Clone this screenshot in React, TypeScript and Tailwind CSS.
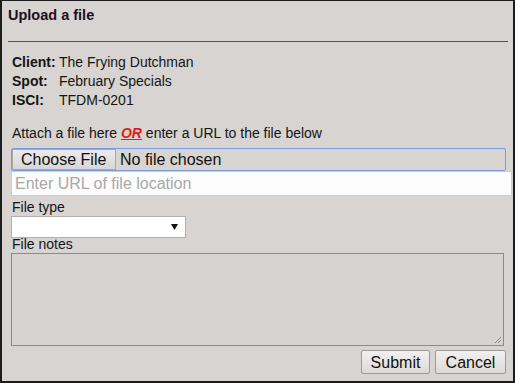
export default function App() {
  const info = [
    ["Client:", "The Frying Dutchman"],
    ["Spot:", "February Specials"],
    ["ISCI:", "TFDM-0201"],
  ]

  return (
    <div className="w-[515px] h-[383px] overflow-hidden bg-[#d7d4d1] border-x-2 border-t border-b-2 border-[#1c1c1c] font-['Liberation_Sans',Arial,sans-serif] text-[#151515]">
      {/* Header */}
      <div className="pl-[6px] pt-[6px]">
        <h2 className="text-[14.5px] leading-[17px] font-bold text-[#1d0f1d]">Upload a file</h2>
        <div className="mt-[17px] h-px w-[500px] bg-[#555]" />
      </div>

      <div className="pl-[9px] pr-[7px]">
        {/* Details */}
        <div className="mt-[11px] pl-px text-[14px] leading-[19px]">
          {info.map(([label, value]) => (
            <div key={label} className="flex">
              <span className="w-[47px] font-bold">{label}</span>
              <span>{value}</span>
            </div>
          ))}
        </div>

        <p className="mt-[16px] pl-px text-[14px] leading-[15px]">
          Attach a file here{" "}
          <span className="font-bold italic underline text-[#e01b1b]">OR</span> enter a URL to the file below
        </p>

        {/* File picker */}
        <div className="mt-[7px] flex items-center w-[495px] h-[23px] border border-[#7b9be3] rounded-[2px] text-[16px] leading-[19px]">
          <span className="flex items-center h-[21px] w-[104px] pl-[8px] border border-[#a9a7a5] bg-gradient-to-b from-[#ecebea] to-[#d9d7d5] text-[#111]">
            Choose File
          </span>
          <span className="pl-[4px] text-[#111]">No file chosen</span>
        </div>

        <div className="flex items-center w-[501px] h-[25px] border border-[#d0cecc] bg-[#fdfcfc] pl-[3px] text-[16px] text-[#a8a8a8]">
          Enter URL of file location
        </div>

        <div className="mt-[5px] pl-px text-[14px] leading-[13px]">File type</div>
        <div className="mt-[2px] flex items-center justify-end w-[175px] h-[22px] border border-[#b2b0ae] bg-white pr-[7px]">
          <svg width="7" height="6" viewBox="0 0 7 6">
            <path d="M0 0h7L3.5 6z" fill="#111" />
          </svg>
        </div>

        <div className="pl-px text-[14px] leading-[13px]">File notes</div>
        <div className="relative mt-[2px] w-[493px] h-[93px] border border-[#8d8b89] bg-[#d6d3d0]">
          <svg className="absolute right-[1px] bottom-[1px]" width="9" height="9" viewBox="0 0 9 9">
            <path d="M8 2L2 8M8 5L5 8" stroke="#8a8886" strokeWidth="1" />
          </svg>
        </div>

        {/* Actions */}
        <div className="mt-[4px] flex justify-end gap-[5px] text-[16px]">
          <button className="w-[69px] h-[24px] border border-[#9c9a98] rounded-[2px] bg-gradient-to-b from-[#f2f1f0] to-[#dcdad8] text-[#111]">
            Submit
          </button>
          <button className="w-[71px] h-[24px] border border-[#9c9a98] rounded-[2px] bg-gradient-to-b from-[#f2f1f0] to-[#dcdad8] text-[#111]">
            Cancel
          </button>
        </div>
      </div>
    </div>
  )
}
